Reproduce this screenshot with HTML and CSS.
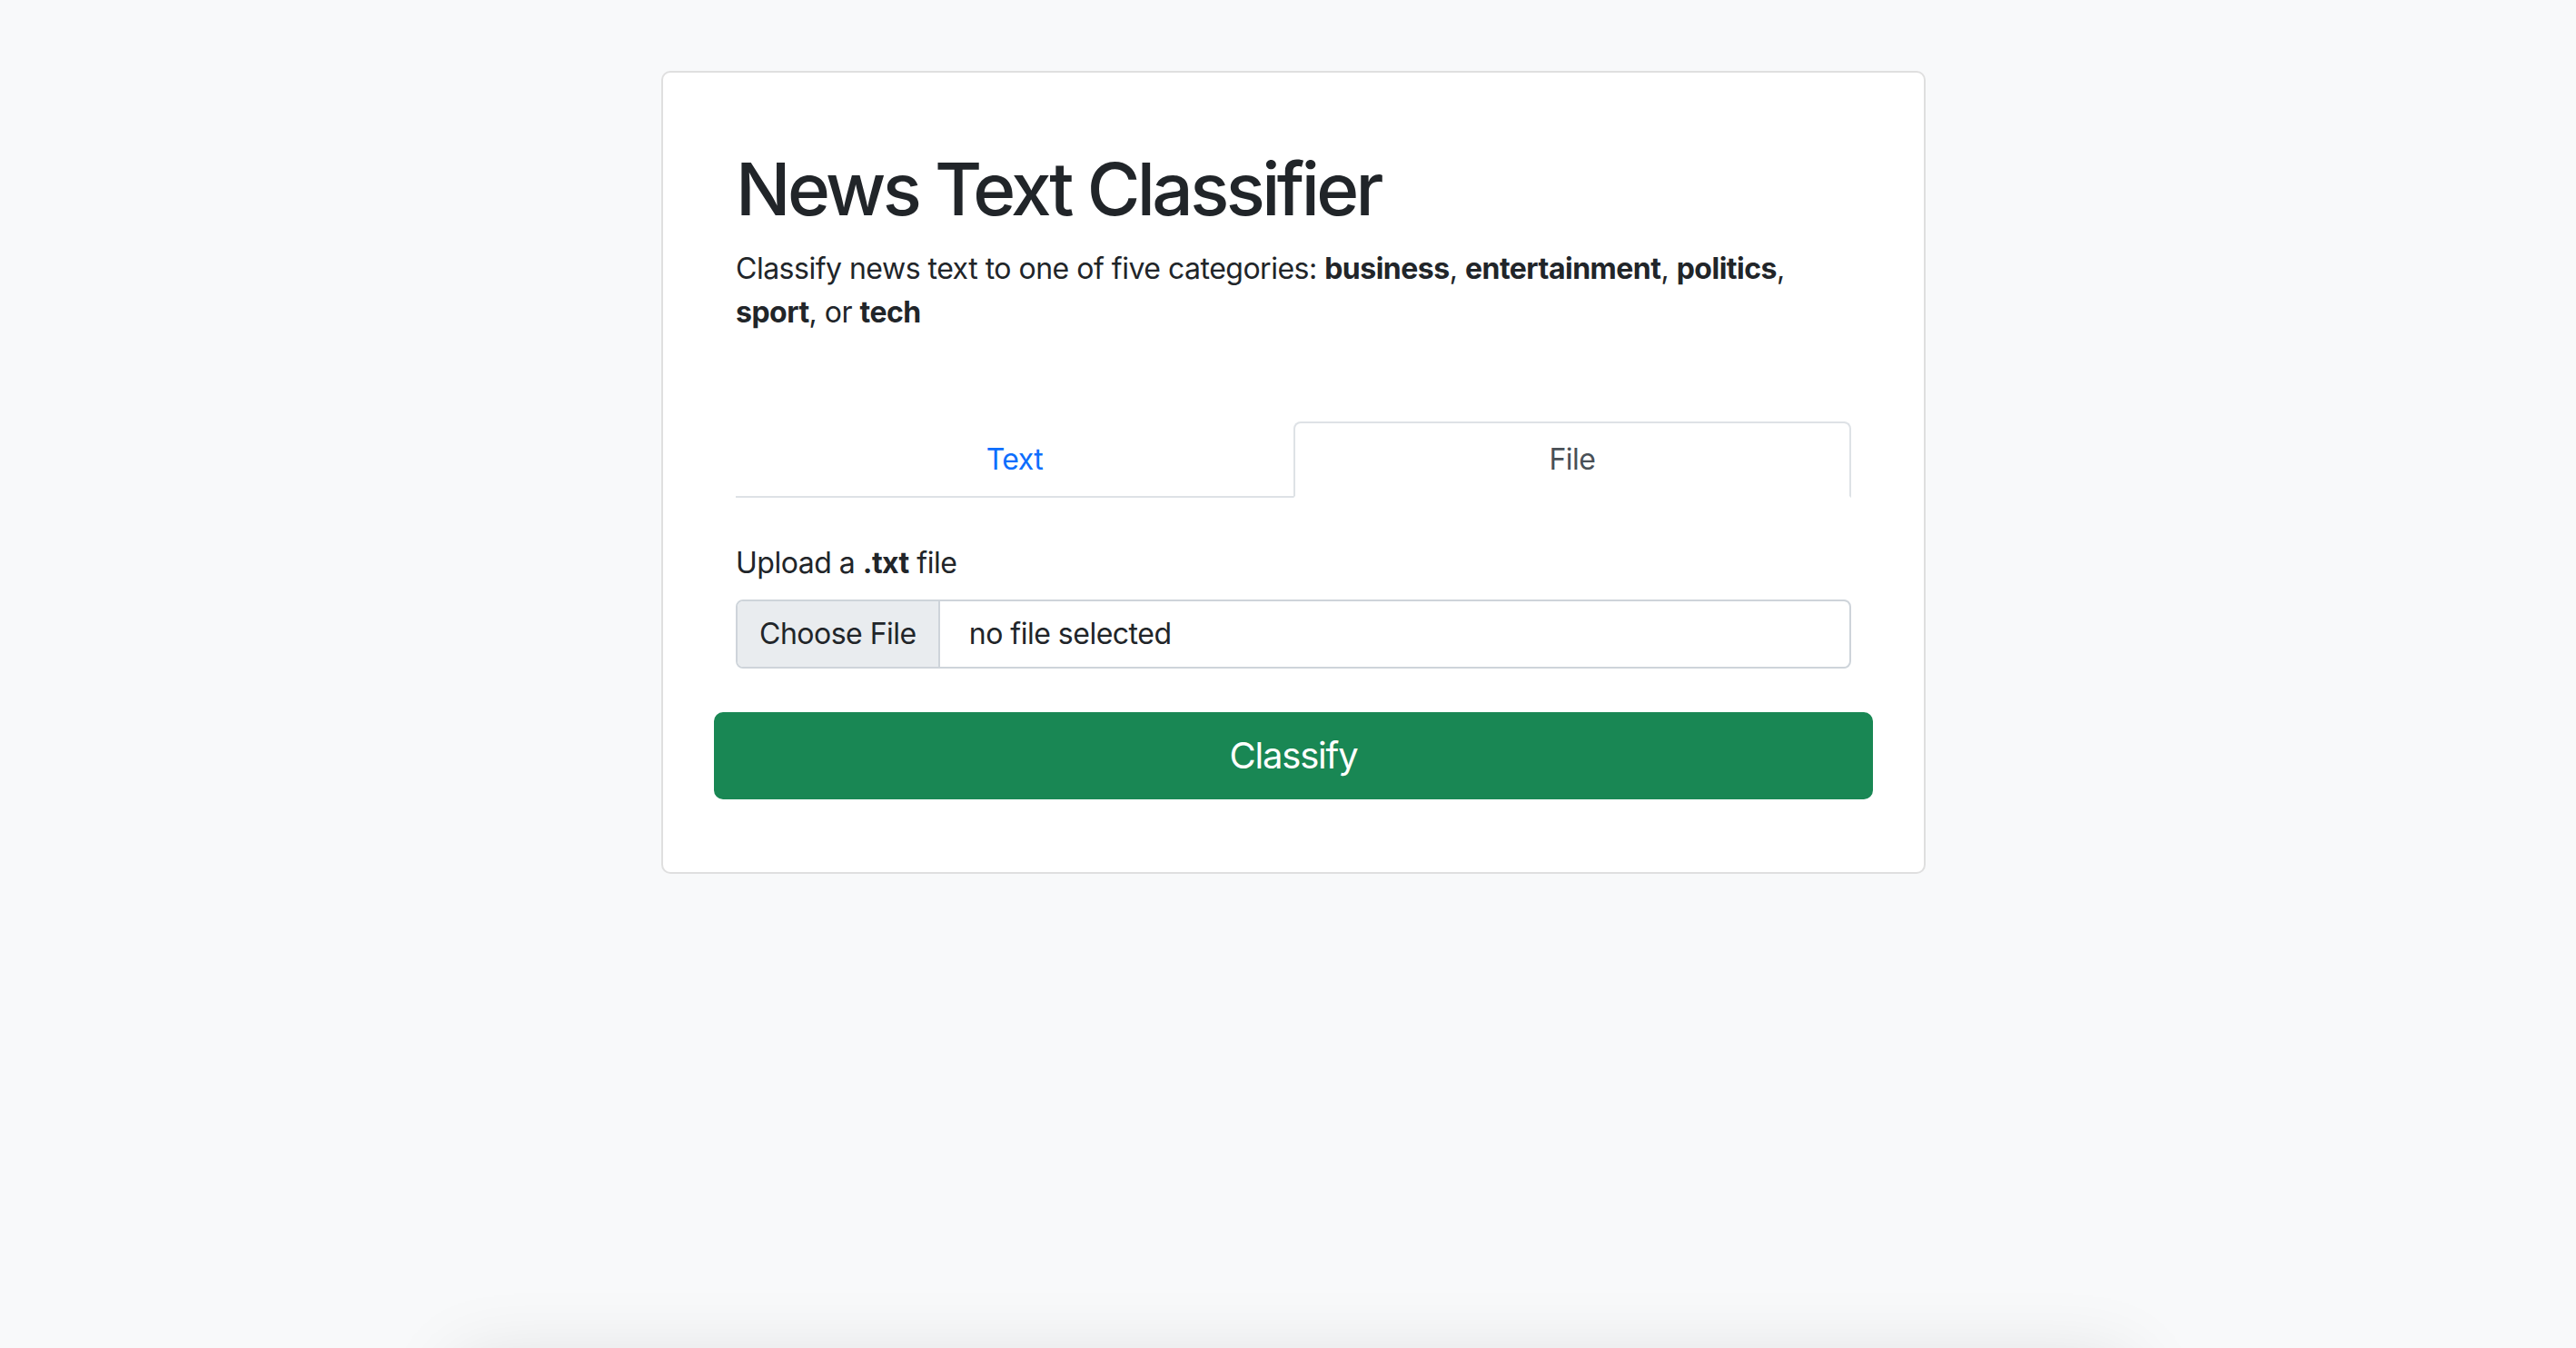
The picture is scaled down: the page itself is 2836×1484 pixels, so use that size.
FILE: index.html
```html
<!DOCTYPE html>
<html lang="en">
<head>
<meta charset="utf-8">
<title>News Text Classifier</title>
<link rel="stylesheet" href="styles.css">
</head>
<body>
<main class="page">
  <section class="card">
    <h1 class="title">News Text Classifier</h1>
    <p class="intro">Classify news text to one of five categories: <b>business</b>, <b>entertainment</b>, <b>politics</b>, <b>sport</b>, or <b>tech</b></p>
    <nav class="tabs">
      <a class="tab">Text</a>
      <a class="tab active">File</a>
    </nav>
    <div class="pane">
      <label class="label">Upload a <b>.txt</b> file</label>
      <div class="file-input">
        <span class="file-btn">Choose File</span>
        <span class="file-name">no file selected</span>
      </div>
      <div class="actions">
        <button class="btn">Classify</button>
      </div>
    </div>
  </section>
  <div class="results"></div>
</main>
</body>
</html>
```
FILE: styles.css
```css
html, body {
  margin: 0;
  padding: 0;
}
body {
  background: #f8f9fa;
  font-family: Inter, "Noto Sans", "Liberation Sans", sans-serif;
  font-size: 32px;
  line-height: 1.5;
  letter-spacing: -0.5px;
  color: #212529;
  overflow: hidden;
  height: 1484px;
}
.page {
  display: flex;
  flex-direction: column;
  align-items: center;
  padding: 78px 0 0 12px;
}
.card {
  box-sizing: border-box;
  width: 1392px;
  background: #fff;
  border: 2px solid #dfdfdf;
  border-radius: 10px;
  padding: 80px;
}
.title {
  font-size: 80px;
  font-weight: 500;
  line-height: 1.2;
  margin: 0 0 16px;
  letter-spacing: -3.6px;
}
.intro {
  margin: 0 0 96px;
}
.intro b, .label b {
  font-weight: 700;
}
.tabs {
  display: flex;
  border-bottom: 2px solid #dee2e6;
}
.tab {
  flex: 1;
  text-align: center;
  padding: 16px 32px;
  border: 2px solid transparent;
  border-top-left-radius: 8px;
  border-top-right-radius: 8px;
  margin-bottom: -2px;
  color: #0d6efd;
  line-height: 48px;
}
.tab.active {
  color: #495057;
  background: #fff;
  border-color: #dee2e6 #dee2e6 #fff;
}
.pane {
  padding-top: 48px;
}
.label {
  display: block;
  margin-bottom: 16px;
}
.file-input {
  display: flex;
  border: 2px solid #ced4da;
  border-radius: 8px;
  overflow: hidden;
  background: #fff;
}
.file-btn {
  background: #e9ecef;
  padding: 12px 24px;
  border-right: 2px solid #ced4da;
  line-height: 48px;
}
.file-name {
  padding: 12px 32px;
  line-height: 48px;
}
.actions {
  margin: 48px -24px 0;
}
.btn {
  display: block;
  width: 100%;
  box-sizing: border-box;
  background: #198754;
  border: 2px solid #198754;
  border-radius: 10px;
  color: #fff;
  font-family: inherit;
  font-size: 40px;
  line-height: 60px;
  letter-spacing: -1.2px;
  padding: 16px 32px;
}
.results {
  width: 1840px;
  height: 300px;
  margin-top: 538px;
  background: #f8f9fa;
  box-shadow: 0 0 80px rgba(0, 0, 0, 0.12);
  flex-shrink: 0;
}
```
